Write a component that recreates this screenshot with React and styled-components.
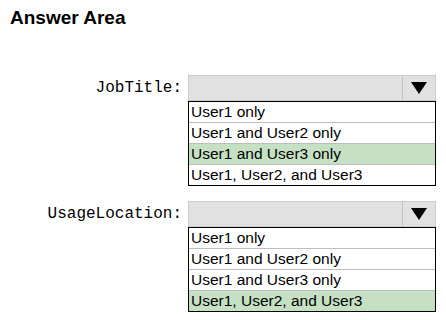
import { Fragment } from "react";
import styled, { createGlobalStyle } from "styled-components";

const GlobalStyle = createGlobalStyle`
  html, body {
    margin: 0;
    padding: 0;
    background: #ffffff;
  }
  body {
    font-family: "Liberation Sans", Arial, sans-serif;
    color: #000;
  }
`;

const Page = styled.div`
  width: 446px;
  height: 320px;
  box-sizing: border-box;
  padding-top: 6px;
`;

const Title = styled.h1`
  margin: 0 0 0 10px;
  font-size: 19px;
  line-height: 24px;
  font-weight: bold;
`;

const Form = styled.div`
  display: grid;
  grid-template-columns: 182px 248px;
  column-gap: 6px;
  row-gap: 15px;
  margin-top: 45px;
`;

const Label = styled.div`
  font-family: "Liberation Mono", "Courier New", monospace;
  font-size: 16px;
  height: 26px;
  line-height: 26px;
  text-align: right;
`;

const Dropdown = styled.div`
  display: flex;
  flex-direction: column;
`;

const Select = styled.div`
  display: flex;
  height: 26px;
  box-sizing: border-box;
  background: #e1e1e1;
  border: 1px solid #cccccc;
`;

const SelectValue = styled.div`
  flex: 1;
`;

const ArrowButton = styled.div`
  width: 32px;
  display: flex;
  align-items: center;
  justify-content: center;
  border-left: 1px solid #c4c4c4;
`;

const Arrow = styled.div`
  width: 0;
  height: 0;
  border-left: 8px solid transparent;
  border-right: 8px solid transparent;
  border-top: 12px solid #000;
`;

const List = styled.div`
  border: 1px solid #000;
  background: #fff;
`;

const Option = styled.div`
  height: 20px;
  line-height: 20px;
  padding-left: 2px;
  font-size: 15.5px;
  background: ${(p) => (p.$selected ? "#c5e0c3" : "#fff")};
  & + & {
    border-top: 1px solid #bdbdbd;
  }
`;

const options = [
  "User1 only",
  "User1 and User2 only",
  "User1 and User3 only",
  "User1, User2, and User3",
];

const fields = [
  { label: "JobTitle:", selected: 2 },
  { label: "UsageLocation:", selected: 3 },
];

export default function App() {
  return (
    <Page>
      <GlobalStyle />
      <Title>Answer Area</Title>
      <Form>
        {fields.map((f) => (
          <Fragment key={f.label}>
            <Label>{f.label}</Label>
            <Dropdown>
              <Select>
                <SelectValue />
                <ArrowButton>
                  <Arrow />
                </ArrowButton>
              </Select>
              <List>
                {options.map((o, i) => (
                  <Option key={o} $selected={i === f.selected}>
                    {o}
                  </Option>
                ))}
              </List>
            </Dropdown>
          </Fragment>
        ))}
      </Form>
    </Page>
  );
}
